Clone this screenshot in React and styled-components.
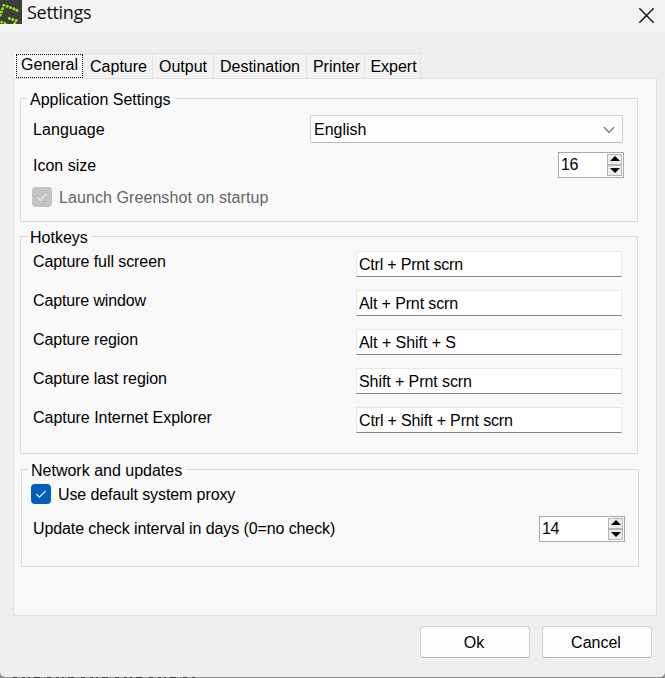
import React from "react";
import styled, { createGlobalStyle } from "styled-components";

const GlobalStyle = createGlobalStyle`
  * { box-sizing: border-box; }
  html, body { margin: 0; padding: 0; overflow: hidden; }
  body { font: 16px/20px "Liberation Sans", Arial, sans-serif; color: #000; background: #efefef; }
`;

const Screen = styled.div`
  width: 665px;
  height: 678px;
  display: flex;
  flex-direction: column;
  background: #8f8f8f;
  overflow: hidden;
`;

const Dialog = styled.div`
  height: 677px;
  flex: none;
  display: flex;
  flex-direction: column;
  background: #efefef;
  border-radius: 0 0 5px 5px;
`;

const TitleBar = styled.header`
  height: 31px;
  flex: none;
  display: flex;
  align-items: flex-start;
  background: #f3f3f3;
`;

const Title = styled.h1`
  margin: 0 auto 0 5px;
  font: 400 18px/25px "Open Sans", "Noto Sans", sans-serif;
  letter-spacing: -0.3px;
  color: #111;
`;

const CloseButton = styled.button`
  width: 37px;
  height: 26px;
  padding: 0;
  border: 0;
  background: none;
  svg { display: block; margin: 4px 0 0 10px; }
`;

const Tabs = styled.nav`
  height: 47px;
  flex: none;
  display: flex;
  align-items: flex-end;
  padding-left: 14px;
`;

const Tab = styled.button`
  width: ${(p) => p.$width}px;
  height: 25px;
  padding: 1px 0 0 ${(p) => p.$shift || 0}px;
  border: 1px solid #e3e3e3;
  border-width: 1px 1px 0 0;
  background: #f2f2f2;
  font: inherit;
  white-space: nowrap;
`;

const ActiveTab = styled(Tab)`
  height: 27px;
  padding: 2px 1px 0 2px;
  border-color: #e6e6e6;
  background: #f9f9f9;
  span {
    display: block;
    height: 24px;
    line-height: 20px;
    border: 1px dotted #000;
  }
`;

const Panel = styled.main`
  width: 644px;
  height: 538px;
  flex: none;
  margin-left: 13px;
  padding: 11px 0 0 6px;
  border: 1px solid #e0e0e0;
  background: #f9f9f9;
`;

const Group = styled.fieldset`
  width: 618px;
  height: ${(p) => p.$height}px;
  margin: 0 0 ${(p) => p.$after || 0}px ${(p) => p.$indent || 0}px;
  padding: 0;
  border: 1px solid #d9d9d9;
`;

const Legend = styled.legend`
  height: 17px;
  margin-left: 6px;
  padding: 0 4px 0 3px;
  line-height: 20px;
`;

const Rows = styled.div`
  display: flex;
  flex-direction: column;
  gap: ${(p) => p.$gap}px;
  padding: ${(p) => p.$top}px ${(p) => p.$right}px 0 ${(p) => p.$left || 12}px;
`;

const Row = styled.div`
  display: flex;
  justify-content: space-between;
  height: ${(p) => p.$height || 26}px;
`;

const Label = styled.label`
  padding-top: ${(p) => p.$drop || 0}px;
  letter-spacing: ${(p) => p.$spacing || 0}px;
  white-space: nowrap;
`;

const Select = styled.div`
  width: 313px;
  height: 28px;
  display: flex;
  align-items: center;
  justify-content: space-between;
  padding: 1px 7px 0 3px;
  margin-right: 1px;
  border: 1px solid #cfcfcf;
  border-bottom-color: #b9b9b9;
  border-radius: 2px;
  background: #fdfdfd;
`;

const Hotkey = styled.div`
  width: 266px;
  height: 26px;
  padding: 3px 0 0 2px;
  border: 1px solid #e8e8e8;
  border-bottom-color: #858585;
  background: #fff;
  letter-spacing: ${(p) => p.$spacing}px;
`;

const SpinBox = styled.div`
  width: ${(p) => p.$width}px;
  height: 26px;
  display: flex;
  justify-content: space-between;
  padding: 1px 1px 1px 2px;
  border: 1px solid #a6a6ad;
  background: #fff;
  > span { line-height: 22px; letter-spacing: -0.3px; }
`;

const SpinButtons = styled.div`
  width: 15px;
  display: grid;
  grid-template-rows: 11px 11px;
`;

const SpinButton = styled.button`
  display: flex;
  justify-content: center;
  align-items: flex-start;
  padding: ${(p) => p.$top}px 0 0;
  border: 1px solid #b5b5b5;
  background: #ececec;
  svg { display: block; flex: none; }
`;

const CheckRow = styled.div`
  display: flex;
  align-items: center;
  gap: 7px;
  height: 20px;
  margin-left: ${(p) => p.$offset}px;
  color: ${(p) => (p.$disabled ? "#666" : "#000")};
  letter-spacing: ${(p) => p.$spacing || 0}px;
`;

const CheckText = styled.span`
  padding-top: 2px;
`;

const CheckBox = styled.span`
  width: 20px;
  height: 20px;
  display: grid;
  place-items: center;
  border-radius: 4px;
  background: ${(p) => (p.$disabled ? "#c3c3c3" : "#005fb8")};
`;

const Footer = styled.footer`
  display: flex;
  justify-content: flex-end;
  gap: 12px;
  padding: 10px 13px 0 0;
`;

const Button = styled.button`
  width: 110px;
  height: 32px;
  padding: 2px 2px 0 0;
  border: 1px solid #d0d0d0;
  border-bottom-color: #bababa;
  border-radius: 4px;
  background: #fdfdfd;
  font: inherit;
`;

const DOTS = [
  [3.8, 5.3], [7.2, 6.4], [10.6, 7.5], [14, 8.9], [17, 10.4],
  [2.6, 8.8], [1.4, 12], [0.3, 15],
  [9.4, 18.4], [12.8, 19.4], [16.2, 20.6], [14.6, 23.4],
  [1.6, 22], [5, 23.4],
];

const Logo = () => (
  <svg width="22" height="24" viewBox="0 0 22 24">
    <rect width="22" height="24" fill="#3d3d3d" />
    {DOTS.map(([x, y]) => (
      <circle key={`${x}-${y}`} cx={x} cy={y} r="1.55" fill="#84e30b" />
    ))}
  </svg>
);

const Tick = ({ color }) => (
  <svg width="12" height="10" viewBox="0 0 12 10" fill="none" stroke={color} strokeWidth="1.1">
    <path d="M1.3 5.1 4.4 8.2 10.7 1.9" />
  </svg>
);

const Spinner = ({ value, width }) => (
  <SpinBox $width={width}>
    <span>{value}</span>
    <SpinButtons>
      <SpinButton $top={1}>
        <svg width="10" height="5" viewBox="0 0 10 5"><path d="M5 0 10 5H0Z" /></svg>
      </SpinButton>
      <SpinButton $top={2}>
        <svg width="10" height="5" viewBox="0 0 10 5"><path d="M0 0H10L5 5Z" /></svg>
      </SpinButton>
    </SpinButtons>
  </SpinBox>
);

const TABS = [
  ["Capture", 68, 0],
  ["Output", 61, 0],
  ["Destination", 93, 0],
  ["Printer", 58, 2],
  ["Expert", 56, 2],
];

const HOTKEYS = [
  ["Capture full screen", -0.08, "Ctrl + Prnt scrn", -0.2],
  ["Capture window", -0.12, "Alt + Prnt scrn", -0.13],
  ["Capture region", -0.06, "Alt + Shift + S", -0.06],
  ["Capture last region", -0.07, "Shift + Prnt scrn", -0.08],
  ["Capture Internet Explorer", -0.03, "Ctrl + Shift + Prnt scrn", -0.15],
];

export default function App() {
  return (
    <Screen>
      <GlobalStyle />
      <Dialog>
        <TitleBar>
          <Logo />
          <Title>Settings</Title>
          <CloseButton aria-label="Close">
            <svg width="17" height="17" viewBox="0 0 17 17" fill="none" stroke="#1a1a1a" strokeWidth="1.5">
              <path d="M1.3 1.3 15.7 15.7M15.7 1.3 1.3 15.7" />
            </svg>
          </CloseButton>
        </TitleBar>
        <Tabs>
          <ActiveTab $width={71}><span>General</span></ActiveTab>
          {TABS.map(([name, width, shift]) => (
            <Tab key={name} $width={width} $shift={shift}>{name}</Tab>
          ))}
        </Tabs>
        <Panel>
          <Group $height={132} $after={6}>
            <Legend>Application Settings</Legend>
            <Rows $top={8} $right={13} $gap={9}>
              <Row $height={28}>
                <Label $drop={5} $spacing={0.08}>Language</Label>
                <Select>
                  <span>English</span>
                  <svg width="12" height="8" viewBox="0 0 12 8" fill="none" stroke="#666" strokeWidth="1.2">
                    <path d="M1 1.2 6 6.4 11 1.2" />
                  </svg>
                </Select>
              </Row>
              <Row>
                <Label $drop={4}>Icon size</Label>
                <Spinner value="16" width={66} />
              </Row>
              <CheckRow $offset={-1} $spacing={0.08} $disabled>
                <CheckBox $disabled><Tick color="#f2f2f2" /></CheckBox>
                <CheckText>Launch Greenshot on startup</CheckText>
              </CheckRow>
            </Rows>
          </Group>
          <Group $height={226} $after={7}>
            <Legend>Hotkeys</Legend>
            <Rows $top={6} $right={15} $gap={13}>
              {HOTKEYS.map(([name, nameSpacing, keys, keySpacing]) => (
                <Row key={name}>
                  <Label $drop={1} $spacing={nameSpacing}>{name}</Label>
                  <Hotkey $spacing={keySpacing}>{keys}</Hotkey>
                </Row>
              ))}
            </Rows>
          </Group>
          <Group $height={106} $indent={1}>
            <Legend>Network and updates</Legend>
            <Rows $top={6} $right={13} $left={11} $gap={12}>
              <CheckRow $offset={-2} $spacing={-0.1}>
                <CheckBox><Tick color="#fff" /></CheckBox>
                <CheckText>Use default system proxy</CheckText>
              </CheckRow>
              <Row>
                <Label $drop={3} $spacing={-0.1}>Update check interval in days (0=no check)</Label>
                <Spinner value="14" width={86} />
              </Row>
            </Rows>
          </Group>
        </Panel>
        <Footer>
          <Button>Ok</Button>
          <Button>Cancel</Button>
        </Footer>
      </Dialog>
      <svg width="200" height="1" viewBox="0 0 200 1">
        <path d="M13 .5H198" stroke="#3c3c3c" strokeDasharray="4 5 3 3 2 4 6 7" />
      </svg>
    </Screen>
  );
}
